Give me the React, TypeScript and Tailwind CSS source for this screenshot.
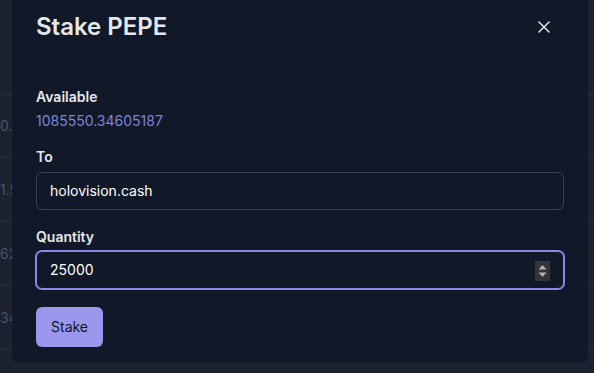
import React, { useState } from "react";
import { X } from "lucide-react";

const rows = ["0.00", "1.5", "62", "34"];

export default function App() {
  const [to, setTo] = useState("holovision.cash");
  const [qty, setQty] = useState("25000");

  return (
    <div
      className="relative h-[373px] w-[594px] overflow-hidden bg-[#1c2230]"
      style={{ fontFamily: "Inter, 'Noto Sans', sans-serif" }}
    >
      {/* faded table behind the dialog */}
      <div className="flex flex-col pt-[94px]">
        {rows.map((r, i) => (
          <div
            key={i}
            className="flex h-[64px] items-center border-b border-[#272e3c] first:border-t"
          >
            <span className="text-sm text-[#4b5363]">{r}</span>
          </div>
        ))}
      </div>

      {/* dialog */}
      <div className="absolute left-[12px] top-[-13px] w-[576px] rounded-lg bg-[#111827] px-6 pb-4 pt-6">
        <div className="flex items-center justify-between">
          <h2 className="text-2xl font-semibold text-[#e5e7eb]">Stake PEPE</h2>
          <button className="mr-[10px] text-[#e5e7eb]">
            <X size={20} strokeWidth={1.8} />
          </button>
        </div>

        <div className="mt-[44px] flex flex-col">
          <span className="text-sm font-semibold text-[#e5e7eb]">Available</span>
          <span className="mt-1 text-sm text-[#7f82dc]">1085550.34605187</span>

          <label className="mt-4 text-sm font-semibold text-[#e5e7eb]">To</label>
          <input
            value={to}
            onChange={(e) => setTo(e.target.value)}
            className="mt-[5px] rounded-md border border-[#374151] bg-[#111827] px-[13px] py-2 text-sm text-white outline-none"
          />

          <label className="mt-[17px] text-sm font-semibold text-[#e5e7eb]">Quantity</label>
          <div className="relative mt-[4px]">
            <input
              inputMode="numeric"
              value={qty}
              onChange={(e) => setQty(e.target.value)}
              className="w-full rounded-md border border-[#8b88ea] bg-[#111827] px-[13px] py-2 text-sm text-white outline-none ring-1 ring-[#8b88ea]"
            />
            {/* number spinner */}
            <div className="absolute right-[14px] top-[10px] flex h-[20px] w-[15px] items-center justify-center bg-[#333538]">
              <svg width="11" height="16" viewBox="0 0 11 16">
                <path d="M1.5 6.5 L5.5 2 L9.5 6.5 Z" fill="#b4b4b4" />
                <path d="M1.5 9.5 L5.5 14 L9.5 9.5 Z" fill="#b4b4b4" />
              </svg>
            </div>
          </div>

          <div className="mt-[18px]">
            <button className="h-[40px] rounded-md bg-[#9a97ec] px-[15px] text-sm text-[#111827]">
              Stake
            </button>
          </div>
        </div>
      </div>
    </div>
  );
}
